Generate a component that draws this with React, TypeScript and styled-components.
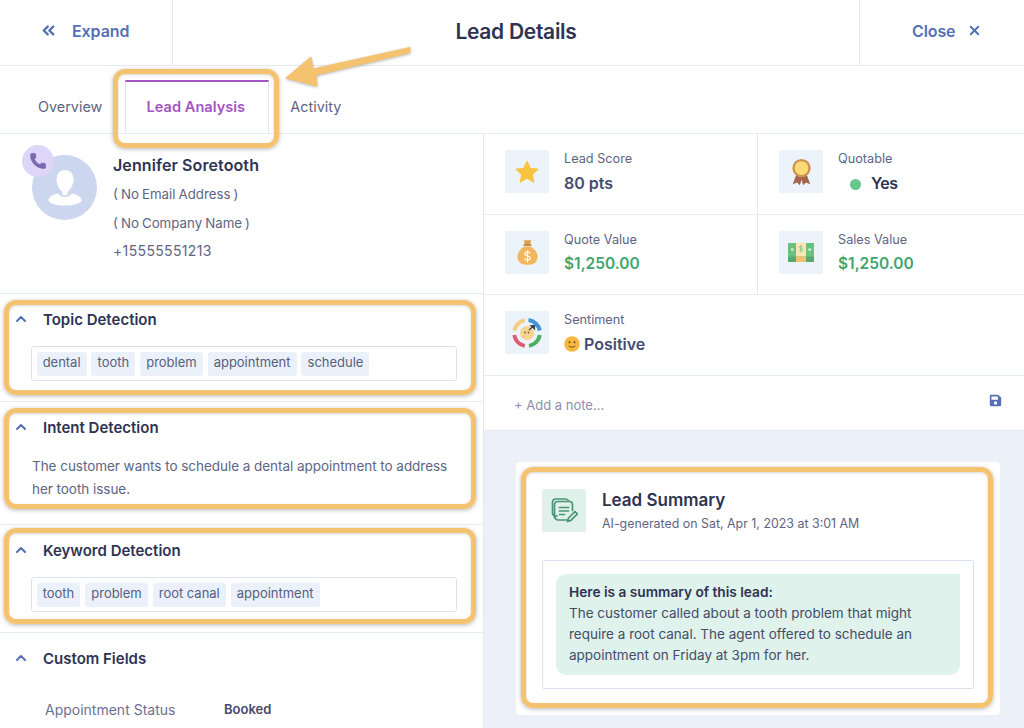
import React from "react";
import styled, { createGlobalStyle } from "styled-components";
import { ChevronsLeft, ChevronUp, Phone, X } from "lucide-react";
import { FaSave } from "react-icons/fa";

const Global = createGlobalStyle`
  html, body { margin: 0; padding: 0; background: #fff; overflow: hidden; }
  body { font-family: Inter, "Liberation Sans", sans-serif; -webkit-font-smoothing: antialiased; }
  * { box-sizing: border-box; }
`;

const Page = styled.div`
  position: relative;
  width: 1024px;
  height: 728px;
  overflow: hidden;
  color: #2e3353;
  display: flex;
  flex-direction: column;
`;

const Header = styled.header`
  height: 66px;
  flex: none;
  display: grid;
  grid-template-columns: 173px 1fr 165px;
  border-bottom: 1px solid #e6ebf3;
`;

const HeaderAction = styled.div<{ $side: "left" | "right" }>`
  display: flex;
  align-items: center;
  font-size: 16px;
  font-weight: 600;
  color: #5570b5;
  padding-bottom: 4px;
  letter-spacing: -0.1px;
  ${(p) =>
    p.$side === "left"
      ? "border-right: 1px solid #dfe6f2; padding-left: 39px; gap: 14px;"
      : "border-left: 1px solid #dfe6f2; padding-left: 52px; gap: 12px;"}
`;

const Title = styled.h1`
  margin: 0;
  padding-bottom: 3px;
  display: flex;
  align-items: center;
  justify-content: center;
  font-size: 21px;
  font-weight: 600;
  letter-spacing: -0.3px;
  color: #2e3353;
`;

const Tabs = styled.nav`
  height: 68px;
  flex: none;
  display: flex;
  align-items: flex-end;
  padding-left: 38px;
  border-bottom: 1px solid #e8ecf3;
`;

const Tab = styled.div<{ $active?: boolean }>`
  height: 53px;
  display: flex;
  align-items: flex-start;
  justify-content: center;
  padding-top: 17px;
  font-size: 14.4px;
  line-height: 20px;
  color: #5e6484;
  ${(p) =>
    p.$active
      ? `width: 144px; margin: 0 21px 0 23px; color: #a554c4; font-weight: 600; font-size: 14.6px;
         border-top: 2px solid #a554c4; border-left: 1px solid #dfe6f2; border-right: 1px solid #dfe6f2;
         padding: 15px 3px 0 0;`
      : ""}
`;

const Body = styled.div`
  flex: 1;
  display: grid;
  grid-template-columns: 484px 1fr;
  min-height: 0;
`;

const LeftColumn = styled.div`
  border-right: 1px solid #e3e8f1;
  display: flex;
  flex-direction: column;
`;

const Contact = styled.section`
  height: 160px;
  flex: none;
  display: flex;
  gap: 16px;
  padding: 21px 0 0 32px;
  border-bottom: 1px solid #e8ecf3;
`;

const Avatar = styled.div`
  position: relative;
  width: 65px;
  height: 65px;
  flex: none;
  border-radius: 50%;
  background: #ccd7ef;
  display: flex;
  align-items: center;
  justify-content: center;
`;

const CallBadge = styled.div`
  position: absolute;
  top: -10px;
  left: -10px;
  width: 32px;
  height: 32px;
  border-radius: 50%;
  background: #ddd6f8;
  display: flex;
  align-items: center;
  justify-content: center;
  color: #7a68b0;
`;

const ContactInfo = styled.div`
  margin-top: -1px;
  display: flex;
  flex-direction: column;
`;

const ContactName = styled.div`
  font-size: 16px;
  font-weight: 600;
  line-height: 22px;
  letter-spacing: 0.1px;
  margin-bottom: 4px;
  color: #2e3353;
`;

const ContactLine = styled.div<{ $phone?: boolean }>`
  font-size: ${(p) => (p.$phone ? "14px" : "13.3px")};
  line-height: 28.5px;
  color: #5e6484;
  word-spacing: -0.7px;
  ${(p) => (p.$phone ? "letter-spacing: 0.35px;" : "")}
`;

const Section = styled.section<{ $height: number }>`
  position: relative;
  height: ${(p) => p.$height}px;
  flex: none;
  padding: 15px 26px 0 13px;
  border-bottom: 1px solid #e8ecf3;
`;

const SectionHead = styled.div`
  display: flex;
  align-items: center;
  height: 20px;
  gap: 14px;
  font-size: 15px;
  font-weight: 600;
  color: #2e3353;
  svg { color: #5570b5; flex: none; }
`;

const TagBox = styled.div`
  margin: 17px 0 0 18px;
  height: 35px;
  display: flex;
  align-items: center;
  gap: 4.8px;
  padding: 0 4.5px;
  border: 1px solid #dbe2f0;
  border-radius: 3px;
`;

const Tag = styled.span`
  height: 24px;
  display: flex;
  align-items: center;
  padding: 0 6.15px 3px;
  border-radius: 3px;
  background: #ebf1fb;
  font-size: 13px;
  letter-spacing: -0.02px;
  color: #565f7f;
`;

const Paragraph = styled.p`
  margin: 18px 0 0 19px;
  font-size: 13.5px;
  line-height: 23px;
  letter-spacing: -0.04px;
  color: #5e6484;
`;

const FieldRow = styled.div`
  margin: 31px 0 0 32px;
  display: grid;
  grid-template-columns: 179px 1fr;
  align-items: center;
  height: 20px;
`;

const FieldName = styled.span`
  font-size: 14px;
  color: #6b7190;
`;

const FieldValue = styled.span`
  font-size: 13px;
  font-weight: 600;
  color: #454a68;
`;

const RightColumn = styled.div`
  display: flex;
  flex-direction: column;
  min-height: 0;
`;

const StatGrid = styled.div`
  display: grid;
  grid-template-columns: 274px 1fr;
  grid-auto-rows: 80.5px;
`;

const Stat = styled.div<{ $wide?: boolean; $divider?: boolean }>`
  display: flex;
  gap: 15px;
  padding: 16px 0 0 21px;
  border-bottom: 1px solid #e8ecf3;
  ${(p) => (p.$wide ? "grid-column: 1 / -1;" : "")}
  ${(p) => (p.$divider ? "border-right: 1px solid #e3e8f1;" : "")}
`;

const IconTile = styled.div<{ $green?: boolean }>`
  width: 44px;
  height: 43px;
  flex: none;
  border-radius: 2px;
  background: ${(p) => (p.$green ? "#dff1ea" : "#edf3fb")};
  display: flex;
  align-items: center;
  justify-content: center;
`;

const StatText = styled.div`
  display: flex;
  flex-direction: column;
`;

const StatLabel = styled.div`
  font-size: 12.7px;
  line-height: 18px;
  color: #5e6484;
`;

const StatValue = styled.div<{ $tone?: "money" | "dark" }>`
  margin-top: 4px;
  display: flex;
  align-items: center;
  font-size: ${(p) => (p.$tone === "money" ? "15.5px" : "16px")};
  line-height: 22px;
  font-weight: 600;
  letter-spacing: ${(p) => (p.$tone === "dark" ? "-0.5px" : "0")};
  color: ${(p) => (p.$tone === "money" ? "#3ea56f" : p.$tone === "dark" ? "#2e3353" : "#454c70")};
`;

const StatusDot = styled.span`
  width: 11px;
  height: 11px;
  border-radius: 50%;
  background: #66c78c;
  margin: 2px 10px 0 12px;
`;

const NoteRow = styled.div`
  height: 55px;
  flex: none;
  display: flex;
  justify-content: space-between;
  padding: 20px 22px 0 30px;
  border-bottom: 1px solid #e3e8f1;
  font-size: 13px;
  line-height: 18px;
  color: #8a90ad;
  svg { color: #5570b5; margin-top: -2px; }
`;

const SummaryArea = styled.div`
  flex: 1;
  background: #ebf0f9;
  padding: 31px 24px 0 32px;
`;

const SummaryCard = styled.div`
  position: relative;
  height: 253px;
  background: #fff;
  border-radius: 4px;
  padding: 27px 26px 0 26px;
`;

const SummaryHead = styled.div`
  display: flex;
  gap: 16px;
`;

const SummaryTitle = styled.div`
  font-size: 17px;
  font-weight: 600;
  line-height: 24px;
  margin-top: -1px;
  color: #2e3353;
`;

const SummaryMeta = styled.div`
  font-size: 12.4px;
  line-height: 18px;
  margin-top: 3px;
  color: #5e6484;
`;

const SummaryBox = styled.div`
  margin-top: 27px;
  height: 129px;
  padding: 13px 13px;
  border: 1px solid #dbe2f0;
  border-radius: 2px;
`;

const SummaryBubble = styled.div`
  height: 101px;
  padding: 8px 13px;
  background: #dff2eb;
  border-radius: 10px 0 10px 10px;
  font-size: 13.5px;
  line-height: 21px;
  color: #454c68;
  strong { display: block; font-size: 13.7px; font-weight: 600; color: #2e3353; }
`;

const Highlight = styled.div<{ $inset: string }>`
  position: absolute;
  inset: ${(p) => p.$inset};
  border: 5px solid #f5c26f;
  border-radius: 12px;
  box-shadow: 0 1px 4px rgba(70, 70, 70, 0.4), inset 0 1px 3px rgba(70, 70, 70, 0.22);
  pointer-events: none;
  z-index: 2;
`;

const TabHighlight = styled(Highlight)`
  inset: auto;
  top: 69px;
  left: 113px;
  width: 166px;
  height: 79px;
`;

const ArrowOverlay = styled.svg`
  position: absolute;
  top: 40px;
  left: 280px;
  z-index: 2;
`;

const Star = () => (
  <svg width="26" height="26" viewBox="0 0 26 26">
    <polygon points="13,2.5 16.2,9.6 23.6,10.3 18,15.4 19.7,23 13,19 6.3,23 8,15.4 2.4,10.3 9.8,9.6" fill="#f9c440" stroke="#f9c440" strokeWidth="1.4" strokeLinejoin="round" />
  </svg>
);

const Ribbon = () => (
  <svg width="21" height="28" viewBox="0 0 24 32">
    <path d="M6 19 L2 30 L7 28 L10 31 L13 22Z" fill="#a5654c" />
    <path d="M18 19 L22 30 L17 28 L14 31 L11 22Z" fill="#a5654c" />
    <circle cx="12" cy="11.5" r="10.5" fill="#cf9450" />
    <circle cx="12" cy="11.5" r="7.8" fill="#f9dc78" />
  </svg>
);

const MoneyBag = () => (
  <svg width="21" height="27" viewBox="0 0 24 30">
    <path d="M7.5 1h9l-2 4.5v2h-5v-2z" fill="#d9a04f" />
    <rect x="7.5" y="5" width="9" height="2.5" fill="#c98f41" />
    <path d="M8.5 8h7C20 10.5 23.5 15 23.5 20c0 6-5 9-11.5 9S.5 26 .5 20C.5 15 4 10.5 8.5 8z" fill="#f3b65c" />
    <path d="M15 16c-.6-1.2-1.7-1.7-3-1.7-1.6 0-3 .8-3 2.3 0 3.2 6.2 1.5 6.2 4.8 0 1.5-1.4 2.4-3.2 2.4-1.5 0-2.8-.7-3.3-2M12 12.5v14" fill="none" stroke="#fff" strokeWidth="1.3" />
  </svg>
);

const Cash = () => (
  <svg width="28" height="19" viewBox="0 0 28 21" preserveAspectRatio="none">
    <rect width="26" height="18" x="1" y="0" fill="#6cc182" />
    <rect width="10" height="18" x="9" y="0" fill="#fbe5b4" />
    <rect width="26" height="6" x="1" y="15" fill="#5aa86f" />
    <rect width="10" height="6" x="9" y="15" fill="#f3c175" />
    <rect width="2.5" height="2.5" x="4" y="6" fill="#dff3e4" />
    <rect width="2.5" height="2.5" x="21.5" y="6" fill="#dff3e4" />
    <path d="M15.5 4.5c-.4-.7-1-.9-1.5-.9-.8 0-1.5.4-1.5 1.2 0 1.5 3.1.8 3.1 2.5 0 .8-.7 1.2-1.6 1.2-.7 0-1.3-.3-1.6-1M14 2.500v8" fill="none" stroke="#7cc48f" strokeWidth=".9" />
  </svg>
);

const SentimentRing = () => (
  <svg width="30" height="30" viewBox="0 0 30 30">
    <g fill="none" strokeWidth="4">
      <path d="M2.5 12.5A13 13 0 0 1 12.8 2.2" stroke="#f8cb7d" />
      <path d="M16.5 2.1A13 13 0 0 1 27.8 12.5" stroke="#4396d4" />
      <path d="M27.8 17A13 13 0 0 1 17 27.9" stroke="#4caf5f" />
      <path d="M12.8 27.9A13 13 0 0 1 2.3 17" stroke="#dd5a70" />
    </g>
    <circle cx="15" cy="15" r="7" fill="#f9d48e" />
    <circle cx="13" cy="14.5" r=".9" fill="#75624a" />
    <circle cx="16.5" cy="14.5" r=".9" fill="#75624a" />
    <path d="M17 12l5-4.500M19 7.500h3.500V11z" stroke="#3c4150" strokeWidth="1.2" fill="#3c4150" />
  </svg>
);

const Smile = styled.svg`
  margin-right: 4px;
  flex: none;
`;

const SmileFace = () => (
  <Smile width="16" height="16" viewBox="0 0 16 16">
    <circle cx="8" cy="8" r="7.8" fill="#f6b93f" />
    <circle cx="5.5" cy="6.3" r="1" fill="#6b4a1d" />
    <circle cx="10.5" cy="6.3" r="1" fill="#6b4a1d" />
    <path d="M4.5 9.8c1 1.8 6 1.8 7 0" fill="none" stroke="#6b4a1d" strokeWidth=".9" />
  </Smile>
);

const NotesIcon = () => (
  <svg width="28" height="28" viewBox="0 0 28 28" fill="none" stroke="#4b9477" strokeWidth="1.7" strokeLinecap="round" strokeLinejoin="round">
    <path d="M7 20H5.500A3 3 0 0 1 2.500 17V6A3 3 0 0 1 5.500 3h10A3 3 0 0 1 18.500 5" />
    <path d="M4.500 21.500V8.500A3 3 0 0 1 7.500 5.500h12a3 3 0 0 1 3 3v6" />
    <path d="M17 24H8a3 3 0 0 1-3-3" />
    <path d="M9.500 11.500h9M9.500 15h9M9.500 18.500h5" />
    <path d="M17.500 25.500l1-3.500 6.500-6.500 2.400 2.400-6.500 6.500z" fill="#dff1ea" />
  </svg>
);

const Person = () => (
  <svg width="34" height="36" viewBox="0 0 34 36">
    <path d="M17 0c5 0 8.500 3.800 8.500 9.500 0 5-3 10-6 12.500 0 .8 0 1.500.5 2.300-1.500 1.300-4.500 1.300-6 0 .5-.8.500-1.500.5-2.300-3-2.500-6-7.500-6-12.500C8.500 3.800 12 0 17 0z" fill="#fff" />
    <path d="M10 23.500c1.800 2.500 4.300 3.500 7 3.500s5.200-1 7-3.500c5.500 1 9.500 3.800 9.500 6.500 0 3.500-7.500 5.500-16.500 5.500S.5 33.500.5 30c0-2.700 4-5.500 9.500-6.500z" fill="#fff" />
  </svg>
);

const sectionChevron = <ChevronUp size={16} strokeWidth={3} />;

export default function App() {
  return (
    <Page>
      <Global />
      <Header>
        <HeaderAction $side="left">
          <ChevronsLeft size={19} strokeWidth={3} />
          Expand
        </HeaderAction>
        <Title>Lead Details</Title>
        <HeaderAction $side="right">
          Close
          <X size={15} strokeWidth={3} />
        </HeaderAction>
      </Header>

      <Tabs>
        <Tab>Overview</Tab>
        <Tab $active>Lead Analysis</Tab>
        <Tab>Activity</Tab>
      </Tabs>

      <Body>
        <LeftColumn>
          <Contact>
            <Avatar>
              <CallBadge>
                <Phone size={18} fill="currentColor" strokeWidth={1} />
              </CallBadge>
              <Person />
            </Avatar>
            <ContactInfo>
              <ContactName>Jennifer Soretooth</ContactName>
              <ContactLine>( No Email Address )</ContactLine>
              <ContactLine>( No Company Name )</ContactLine>
              <ContactLine $phone>+15555551213</ContactLine>
            </ContactInfo>
          </Contact>

          <Section $height={108}>
            <Highlight $inset="6px 7px 6px 4px" />
            <SectionHead>{sectionChevron}Topic Detection</SectionHead>
            <TagBox>
              <Tag>dental</Tag>
              <Tag>tooth</Tag>
              <Tag>problem</Tag>
              <Tag>appointment</Tag>
              <Tag>schedule</Tag>
            </TagBox>
          </Section>

          <Section $height={123}>
            <Highlight $inset="6px 7px 15px 4px" />
            <SectionHead>{sectionChevron}Intent Detection</SectionHead>
            <Paragraph>
              The customer wants to schedule a dental appointment to address her tooth issue.
            </Paragraph>
          </Section>

          <Section $height={108}>
            <Highlight $inset="3px 7px 8px 4px" />
            <SectionHead>{sectionChevron}Keyword Detection</SectionHead>
            <TagBox>
              <Tag>tooth</Tag>
              <Tag>problem</Tag>
              <Tag>root canal</Tag>
              <Tag>appointment</Tag>
            </TagBox>
          </Section>

          <Section $height={100}>
            <SectionHead>{sectionChevron}Custom Fields</SectionHead>
            <FieldRow>
              <FieldName>Appointment Status</FieldName>
              <FieldValue>Booked</FieldValue>
            </FieldRow>
          </Section>
        </LeftColumn>

        <RightColumn>
          <StatGrid>
            <Stat $divider>
              <IconTile><Star /></IconTile>
              <StatText>
                <StatLabel>Lead Score</StatLabel>
                <StatValue>80 pts</StatValue>
              </StatText>
            </Stat>
            <Stat>
              <IconTile><Ribbon /></IconTile>
              <StatText>
                <StatLabel>Quotable</StatLabel>
                <StatValue $tone="dark"><StatusDot />Yes</StatValue>
              </StatText>
            </Stat>
            <Stat $divider>
              <IconTile><MoneyBag /></IconTile>
              <StatText>
                <StatLabel>Quote Value</StatLabel>
                <StatValue $tone="money">$1,250.00</StatValue>
              </StatText>
            </Stat>
            <Stat>
              <IconTile><Cash /></IconTile>
              <StatText>
                <StatLabel>Sales Value</StatLabel>
                <StatValue $tone="money">$1,250.00</StatValue>
              </StatText>
            </Stat>
            <Stat $wide>
              <IconTile><SentimentRing /></IconTile>
              <StatText>
                <StatLabel>Sentiment</StatLabel>
                <StatValue><SmileFace />Positive</StatValue>
              </StatText>
            </Stat>
          </StatGrid>

          <NoteRow>
            + Add a note...
            <FaSave size={13} />
          </NoteRow>

          <SummaryArea>
            <SummaryCard>
              <Highlight $inset="5px 7px 7px 5px" />
              <SummaryHead>
                <IconTile $green><NotesIcon /></IconTile>
                <div>
                  <SummaryTitle>Lead Summary</SummaryTitle>
                  <SummaryMeta>AI-generated on Sat, Apr 1, 2023 at 3:01 AM</SummaryMeta>
                </div>
              </SummaryHead>
              <SummaryBox>
                <SummaryBubble>
                  <strong>Here is a summary of this lead:</strong>
                  The customer called about a tooth problem that might require a root canal. The agent offered to schedule an appointment on Friday at 3pm for her.
                </SummaryBubble>
              </SummaryBox>
            </SummaryCard>
          </SummaryArea>
        </RightColumn>
      </Body>

      <TabHighlight $inset="auto" />
      <ArrowOverlay width="140" height="56" viewBox="0 0 140 56">
        <path d="M130 7.500 L130 12.500 L36 35 L37 46 L6 38 L31 17 L33 29 Z" fill="#f5c26f" stroke="#f5c26f" strokeWidth="1" strokeLinejoin="round" style={{ filter: "drop-shadow(0 1px 1.5px rgba(70,70,70,.4))" }} />
      </ArrowOverlay>
    </Page>
  );
}
